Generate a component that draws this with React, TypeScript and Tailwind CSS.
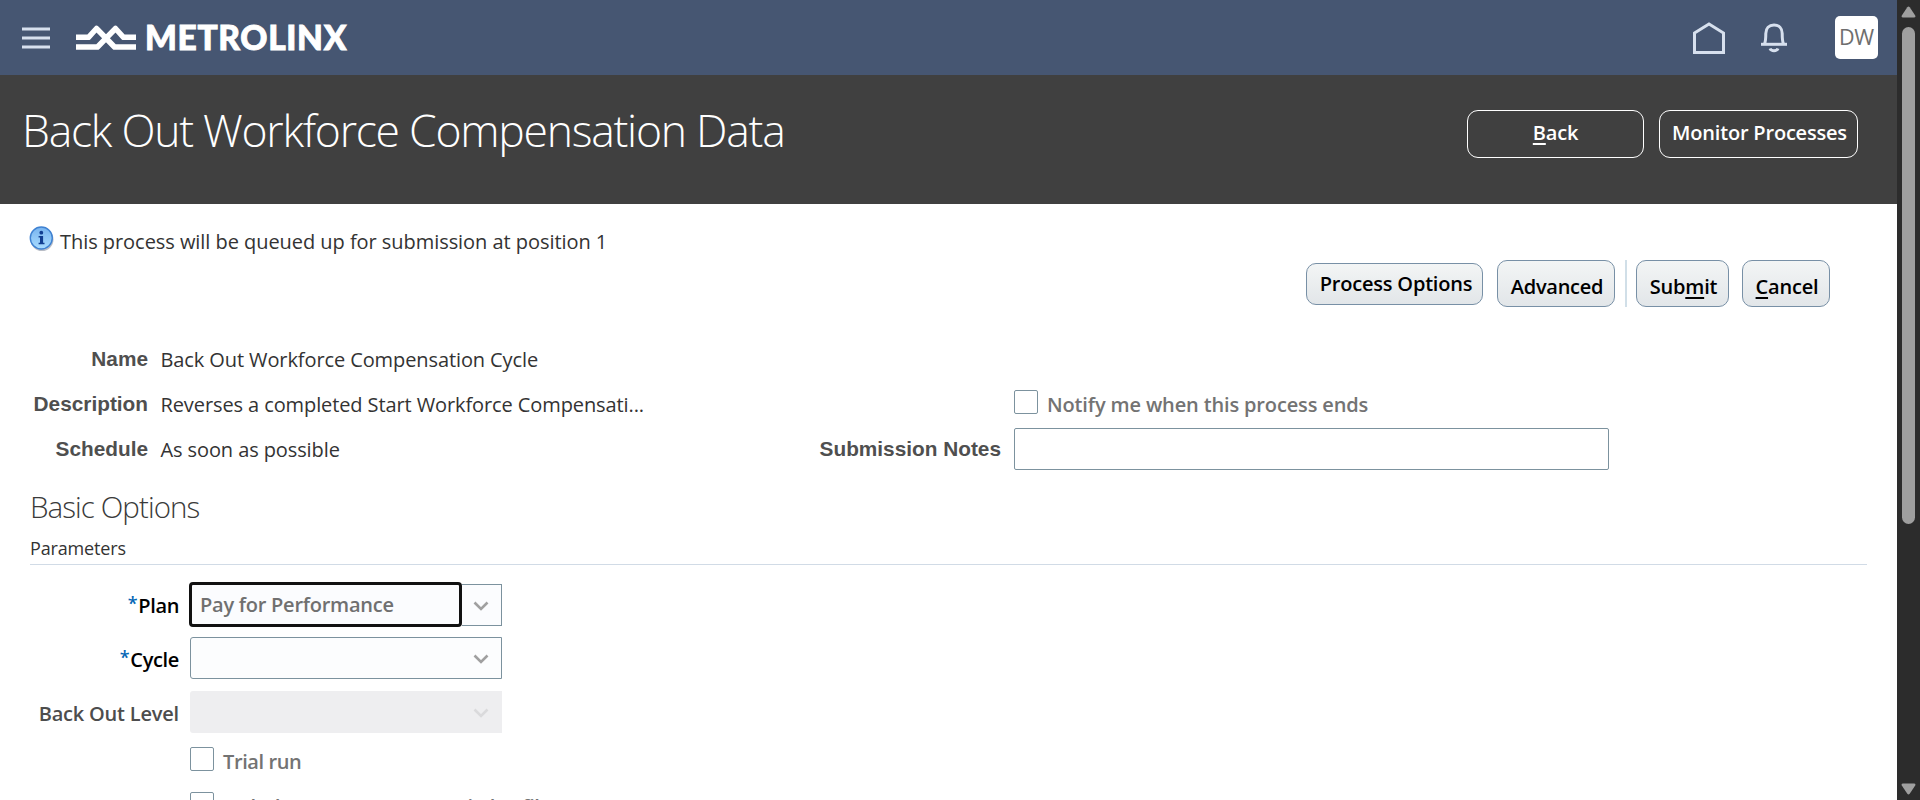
import type { ReactNode } from "react";

function Chevron({ className }: { className: string }) {
  return (
    <svg className={className} width="16" height="10" viewBox="0 0 16 10" fill="none" stroke="currentColor" strokeWidth="2.6">
      <path d="M1.500 1.500 8 8 14.500 1.500" />
    </svg>
  );
}

function TopBar() {
  return (
    <header className="flex h-[75px] shrink-0 items-start bg-[#465672]">
      <svg className="mt-[27px] ml-[22px] text-[#d7e0ee]" width="28" height="22" viewBox="0 0 28 22" fill="currentColor">
        <path d="M0 .5h28v3H0zM0 9.500h28v3H0zM0 18.500h28v3H0z" />
      </svg>
      <svg className="mt-[24px] ml-[26px]" width="60" height="27" viewBox="0 0 60 27" fill="none" stroke="#fff" strokeWidth="5.500" strokeLinejoin="round">
        <path d="M0 13.300H12.500L20.500 4.500 38.500 23H60" />
        <path d="M0 23H21.500L39.500 4.500 47.500 13.300H60" />
      </svg>
      <span className="mt-[17px] ml-[9px] font-['Lato'] text-[33.500px] leading-[40px] font-black tracking-[0.65px] text-white [-webkit-text-stroke:0.9px_white]">METROLINX</span>
      <div className="ml-auto flex items-start">
        <svg className="mt-[21px]" width="32" height="33" viewBox="0 0 32 33" fill="none" stroke="#d7e0ee" strokeWidth="3">
          <path d="M1.500 12 16 3l14.500 9v19.500h-29z" />
        </svg>
        <svg className="mt-[22px] ml-[36px]" width="26" height="32" viewBox="0 0 26 32" fill="none" stroke="#d7e0ee" strokeWidth="3">
          <path d="M0 22.300h26" />
          <path d="M3.500 22c1.300-3 1.300-6.500 1.300-10.500C4.800 6 8 3 13 3s8.200 3 8.200 8.500c0 4 0 7.500 1.300 10.500" />
          <path d="M9 26.500c1.300 3 6.700 3 8 0" />
        </svg>
        <div className="mt-[16px] mr-[19px] ml-[48px] flex h-[43px] w-[43px] items-center justify-center rounded-[5px] bg-white text-[21.500px] text-[#6e6e6e]">
          <span className="tracking-[-0.3px]">DW</span>
        </div>
      </div>
    </header>
  );
}

function TitleBand() {
  return (
    <div className="flex h-[129px] shrink-0 items-start bg-[#404040] text-white">
      <h1 className="mt-[24px] ml-[22px] text-[44.500px] leading-[62px] font-light tracking-[-1.26px]">Back Out Workforce Compensation Data</h1>
      <div className="mt-[35px] mr-[39px] ml-auto flex gap-[15px] text-[20px] font-semibold tracking-[-0.2px]">
        <button className="h-[48px] w-[177px] rounded-[11px] border border-white pb-[3px]">
          <u className="underline decoration-2 underline-offset-[3px]">B</u>ack
        </button>
        <button className="h-[48px] w-[199px] rounded-[11px] border border-white pb-[3px] pl-[2px]">Monitor Processes</button>
      </div>
    </div>
  );
}

function ActionButton({ className, children }: { className: string; children: ReactNode }) {
  return (
    <button className={`rounded-[10px] border border-[#7890a6] bg-linear-to-b from-[#f3f5f5] to-[#e2e6e9] text-[20px] leading-[28px] font-semibold text-black ${className}`}>
      {children}
    </button>
  );
}

function Actions() {
  return (
    <div className="flex h-[47px] items-start pl-[1306px]">
      <ActionButton className="mt-[3px] h-[42px] w-[177px] pl-[3px] tracking-[-0.2px]">Process Options</ActionButton>
      <ActionButton className="ml-[14px] h-[47px] w-[118px] pt-[6px] pl-[2px] tracking-[-0.25px]">Advanced</ActionButton>
      <div className="ml-[10px] h-[47px] w-[2px] bg-[#d1dfe8]" />
      <ActionButton className="ml-[9px] h-[47px] w-[93px] pt-[6px] pl-[2px] tracking-[-0.2px]">
        Sub<u className="decoration-2 underline-offset-[3px]">m</u>it
      </ActionButton>
      <ActionButton className="ml-[13px] h-[47px] w-[88px] pt-[6px] pl-[2px] tracking-[-0.2px]">
        <u className="decoration-2 underline-offset-[3px]">C</u>ancel
      </ActionButton>
    </div>
  );
}

function Detail({ label, children }: { label: string; children: ReactNode }) {
  return (
    <div className="flex h-[45px] items-start">
      <span className="w-[148px] text-right font-['Liberation_Sans'] text-[20.800px] leading-[27px] font-bold text-[#4f4f4f]">{label}</span>
      <span className="mt-px ml-[12.500px] text-[20px] leading-[28px] tracking-[-0.1px] text-[#333]">{children}</span>
    </div>
  );
}

function Checkbox() {
  return <span className="h-[24px] w-[24px] shrink-0 rounded-[2px] border border-[#7c929e] bg-white" />;
}

function ParamLabel({ required, children }: { required?: boolean; children: ReactNode }) {
  return (
    <span className={required ? "flex w-[179px] justify-end font-semibold tracking-[-0.35px] text-black" : "flex w-[179px] justify-end font-semibold tracking-[-0.2px] text-[#4d4d4d]"}>
      {required && <span className="mr-px -mt-[3px] text-[18px] text-[#0567b5]">*</span>}
      {children}
    </span>
  );
}

function Scrollbar() {
  return (
    <div className="flex w-[23px] shrink-0 flex-col items-center bg-[#2c2c2c]">
      <svg className="mt-[6px]" width="15" height="12" viewBox="0 0 15 12" fill="#9f9f9f">
        <path d="M6.300 1.200q1.200-1.400 2.400 0l5.500 8.300q.8 2-1.200 2H2q-2 0-1.200-2z" />
      </svg>
      <div className="mt-[9px] h-[497px] w-[13px] rounded-full bg-[#9f9f9f]" />
      <svg className="mt-auto mb-[5px]" width="15" height="12" viewBox="0 0 15 12" fill="#9f9f9f">
        <path d="M6.300 10.800q1.200 1.400 2.400 0l5.500-8.300q.8-2-1.200-2H2q-2 0-1.200 2z" />
      </svg>
    </div>
  );
}

export default function App() {
  return (
    <div className="flex h-[800px] w-full overflow-hidden bg-white font-['Open_Sans',sans-serif]">
      <div className="flex min-w-0 flex-1 flex-col overflow-hidden">
        <TopBar />
        <TitleBand />
        <main className="flex flex-col">
          <div className="flex h-[56px] items-start">
            <svg className="mt-[22px] ml-[29px]" width="26" height="26" viewBox="0 0 26 26">
              <defs>
                <linearGradient id="info" x1="0" y1="0" x2="0" y2="1">
                  <stop offset="0" stopColor="#78b4ef" />
                  <stop offset="1" stopColor="#a9dcff" />
                </linearGradient>
              </defs>
              <circle cx="13" cy="13.500" r="11.500" fill="#b9bdc6" />
              <circle cx="12.300" cy="12" r="11" fill="url(#info)" stroke="#3f82d2" strokeWidth="1.400" />
              <circle cx="12.300" cy="6.700" r="1.900" fill="#123f91" />
              <path d="M9.600 10h4.500v6.700h1.400v1.600H9.600v-1.600H11v-5.100H9.600z" fill="#123f91" />
            </svg>
            <span className="mt-[24px] ml-[5px] text-[20px] leading-[28px] tracking-[-0.05px] text-[#333]">This process will be queued up for submission at position 1</span>
          </div>
          <Actions />
          <section className="flex pt-[38px]">
            <div className="w-[800px]">
              <Detail label="Name">Back Out Workforce Compensation Cycle</Detail>
              <Detail label="Description">Reverses a completed Start Workforce Compensati...</Detail>
              <Detail label="Schedule">As soon as possible</Detail>
            </div>
            <div className="flex flex-col pt-[45px]">
              <div className="flex h-[38px] items-start pl-[214px]">
                <Checkbox />
                <span className="mt-px ml-[9px] text-[20px] leading-[28px] font-semibold tracking-[-0.14px] text-[#737373]">Notify me when this process ends</span>
              </div>
              <div className="flex items-start">
                <span className="mt-[7px] w-[201px] text-right font-['Liberation_Sans'] text-[20.800px] leading-[27px] font-bold text-[#4f4f4f]">Submission Notes</span>
                <div className="ml-[13px] h-[42px] w-[595px] rounded-[2px] border border-[#7c929e] bg-white" />
              </div>
            </div>
          </section>
          <h2 className="ml-[30px] h-[40px] pt-[7px] text-[29.500px] leading-[40px] font-light tracking-[-0.92px] text-[#3a3a3a]">Basic Options</h2>
          <div className="mr-[30px] ml-[30px] h-[45px] border-b border-[#d1dbe6]">
            <h3 className="pt-[15px] text-[18px] leading-[26px] tracking-[-0.15px] text-[#333]">Parameters</h3>
          </div>
          <section className="flex flex-col pt-[17px] text-[20px] leading-[28px]">
            <div className="flex h-[55px] items-start">
              <div className="pt-[10px]"><ParamLabel required>Plan</ParamLabel></div>
              <div className="ml-[10px] flex items-center">
                <div className="flex h-[45px] w-[273px] items-center rounded-[4px] border-[3px] border-[#111] bg-[#fbfcfe] pl-[8px] font-semibold text-[#707070]">
                  <span className="tracking-[-0.25px]">Pay for Performance</span>
                </div>
                <div className="flex h-[42px] w-[40px] items-center justify-center border border-l-0 border-[#7c929e] bg-[#fbfcfe]">
                  <Chevron className="mt-[2px] mr-[2px] text-[#a0a0a0]" />
                </div>
              </div>
            </div>
            <div className="flex h-[54px] items-start">
              <div className="pt-[9px]"><ParamLabel required>Cycle</ParamLabel></div>
              <div className="ml-[11px] flex h-[42px] w-[312px] items-center justify-end rounded-l-[3px] border border-[#7c929e] bg-[#fcfdfe] pr-[12px]">
                <Chevron className="mt-[2px] text-[#a0a0a0]" />
              </div>
            </div>
            <div className="flex h-[56px] items-start">
              <div className="pt-[9px]"><ParamLabel>Back Out Level</ParamLabel></div>
              <div className="ml-[11px] flex h-[42px] w-[312px] items-center justify-end rounded-l-[3px] bg-[#eeeef0] pr-[13px]">
                <Chevron className="mt-[2px] text-[#dadadc]" />
              </div>
            </div>
            <div className="flex h-[45px] items-start pl-[190px]">
              <Checkbox />
              <span className="mt-px ml-[9px] font-semibold tracking-[-0.4px] text-[#737373]">Trial run</span>
            </div>
            <div className="flex h-[45px] items-start pl-[190px]">
              <Checkbox />
              <span className="mt-px ml-[9px] font-semibold tracking-[-0.4px] text-[#737373]">Include parameter names in log file</span>
            </div>
          </section>
        </main>
      </div>
      <Scrollbar />
    </div>
  );
}
